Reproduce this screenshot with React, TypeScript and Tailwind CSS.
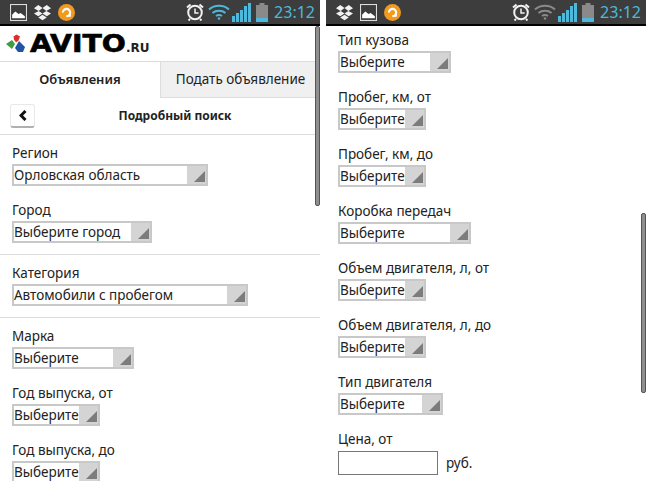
const font = { fontFamily: '"Noto Sans", "Open Sans", sans-serif' };

function ImageIcon({ className }: { className: string }) {
  return (
    <svg className={className} viewBox="0 0 16 16">
      <rect x="0.5" y="0.5" width="15" height="15" fill="none" stroke="#ddd" />
      <path d="M2 13.500V10l3-3 3 2.500 2-1 4 3v2z" fill="#fff" />
    </svg>
  );
}

function DropboxIcon({ className }: { className: string }) {
  return (
    <svg className={className} viewBox="0 0 16 16" fill="#f2f2f2">
      <path d="M4 1l4 2.800L4.400 6.600 0 4zM12 1L8 3.800l3.600 2.800L16 4zM0 9l4 2.600L8 8.900 4.400 6.600zM16 9l-4 2.600L8 8.900l3.600-2.300zM4 12.600l4-2.600 4 2.600-4 2.600z" />
    </svg>
  );
}

function AudioIcon({ className }: { className: string }) {
  return (
    <svg className={className} viewBox="0 0 16 16">
      <circle cx="8" cy="8" r="8" fill="#f39a1c" />
      <path d="M4.600 8a3.400 3.400 0 1 1 3.400 3.400" fill="none" stroke="#fff" strokeWidth="2" />
      <path d="M8 11.400h3.400V8" fill="none" stroke="#fff" strokeWidth="1.400" />
    </svg>
  );
}

function AlarmIcon({ className }: { className: string }) {
  return (
    <svg className={className} viewBox="0 0 18 18" fill="none" stroke="#f2f2f2">
      <circle cx="9" cy="9.500" r="6.800" strokeWidth="2" />
      <path d="M9 5.500v4.400h3.600" strokeWidth="1.500" />
      <path d="M1 4.500L4.500 1.500M17 4.500L13.500 1.500M4 16l-1.500 1.500M14 16l1.500 1.500" strokeWidth="2" />
    </svg>
  );
}

function WifiIcon({ className, color }: { className: string; color: string }) {
  return (
    <svg className={className} viewBox="0 0 22 16" fill="none" stroke={color} strokeWidth="2">
      <path d="M1 5.500c5.500-5 14.500-5 20 0" />
      <path d="M4.500 9c3.500-3 9.500-3 13 0" />
      <path d="M8 12c1.800-1.200 4.200-1.200 6 0" />
      <circle cx="11" cy="14.500" r="1.300" fill={color} stroke="none" />
    </svg>
  );
}

function SignalIcon({ className }: { className: string }) {
  return (
    <svg className={className} viewBox="0 0 19 19" fill="#4db8da">
      <rect x="0" y="13" width="3" height="6" />
      <rect x="4" y="10" width="3" height="9" />
      <rect x="8" y="7" width="3" height="12" />
      <rect x="12" y="3" width="3" height="16" />
      <rect x="16" y="0" width="3" height="19" />
    </svg>
  );
}

function BatteryIcon({ className }: { className: string }) {
  return (
    <svg className={className} viewBox="0 0 12 19">
      <rect x="3.500" y="0" width="5" height="2" fill="#8a8a8a" />
      <rect x="0" y="2" width="12" height="13" fill="#8a8a8a" />
      <rect x="0" y="15" width="12" height="4" fill="#4db8da" />
    </svg>
  );
}

function StatusBar({ left, wifi }: { left: React.ReactNode; wifi: string }) {
  return (
    <div className="flex h-[26px] items-center bg-[#3d3d3d] border-b-2 border-black pl-[10px] pr-[5px]">
      <div className="flex items-center gap-[7px]">{left}</div>
      <div className="ml-auto flex items-center">
        <AlarmIcon className="w-[18px] h-[18px]" />
        <WifiIcon className="ml-[4px] w-[22px] h-[16px]" color={wifi} />
        <SignalIcon className="ml-[2px] w-[19px] h-[19px]" />
        <BatteryIcon className="ml-[5px] w-[12px] h-[19px]" />
        <span className="ml-[6px] text-[16px] text-[#4db8da]">23:12</span>
      </div>
    </div>
  );
}

function Select({ value, width }: { value: string; width: string }) {
  return (
    <div className={`flex h-[22px] ${width} items-center border-2 border-[#c8c8c8] bg-white`}>
      <span className="flex-1 pt-px text-[13.500px] leading-none whitespace-nowrap text-[#222]">{value}</span>
      <span className="flex h-full w-[19px] items-end justify-end bg-[#d4d4d4] pr-px pb-[2px]">
        <svg className="w-[11px] h-[11px]" viewBox="0 0 11 11">
          <path d="M11 0v11H0z" fill="#7c7c7c" />
        </svg>
      </span>
    </div>
  );
}

function Field({ label, value, width, last }: { label: string; value: string; width: string; last?: boolean }) {
  return (
    <div className={last ? 'pb-[11px]' : 'pb-[14px]'}>
      <div className="h-[21px] text-[13.500px] leading-[20px] text-[#222]">{label}</div>
      <Select value={value} width={width} />
    </div>
  );
}

function Scrollbar({ className }: { className: string }) {
  return <div className={`absolute right-0 w-[5px] rounded-[2px] border border-[#555] bg-[#8f8f8f] ${className}`} />;
}

function LeftPanel() {
  return (
    <div className="relative h-[481px] w-[320px] overflow-hidden bg-white">
      <StatusBar
        wifi="#4db8da"
        left={
          <>
            <ImageIcon className="w-[17px] h-[17px]" />
            <DropboxIcon className="w-[17px] h-[17px]" />
            <AudioIcon className="w-[17px] h-[17px]" />
          </>
        }
      />
      <Scrollbar className="top-[26px] h-[180px]" />

      {/* Logo */}
      <div className="flex h-[35px] items-center pl-[6px]">
        <svg className="w-[20px] h-[20px]" viewBox="0 0 20 20">
          <path d="M0 10l6-4 3 4-3 5z" fill="#3f9d3f" />
          <path d="M7.500 2.500l3-2 3.500 2-1.500 4-2.500 2-2-3z" fill="#d8312c" />
          <path d="M13 7l6 6-2 5h-5l-3-4z" fill="#1f55a5" />
        </svg>
        <span
          className="ml-[4px] w-[96px] origin-left scale-x-[1.18] text-[24px] leading-none font-bold text-black"
          style={{ fontFamily: '"DejaVu Sans", sans-serif', WebkitTextStroke: '0.6px black' }}
        >
          AVITO
        </span>
        <span
          className="mt-[8px] text-[12px] leading-none font-bold text-[#222]"
          style={{ fontFamily: '"DejaVu Sans", sans-serif' }}
        >
          .RU
        </span>
      </div>

      {/* Tabs */}
      <div className="flex h-[37px] border-t border-[#ddd]">
        <div className="flex w-[160px] items-center justify-center text-[13px] font-semibold text-[#222]">Объявления</div>
        <div className="flex w-[160px] items-center justify-center border-l border-b border-[#ddd] bg-[#f0f0f0] text-[13.500px] text-[#222]">
          Подать объявление
        </div>
      </div>

      {/* Back row */}
      <div className="flex h-[37px] items-center border-b border-[#ddd] pl-[10px] pr-[5px]">
        <button className="flex h-[24px] w-[25px] items-center justify-center rounded-[3px] border border-[#e8e8e8] border-b-2 border-b-[#b0b0b0] bg-white">
          <svg className="w-[8px] h-[11px]" viewBox="0 0 8 11" fill="none" stroke="#111" strokeWidth="3">
            <path d="M6.500 1L2 5.500 6.500 10" />
          </svg>
        </button>
        <div className="flex-1 text-center text-[12px] font-bold text-[#222]">Подробный поиск</div>
      </div>

      <div className="border-b border-[#ddd] pl-[12px] pt-[8px]">
        <Field label="Регион" value="Орловская область" width="w-[196px]" />
        <Field label="Город" value="Выберите город" width="w-[140px]" last />
      </div>
      <div className="border-b border-[#ddd] pl-[12px] pt-[8px]">
        <Field label="Категория" value="Автомобили с пробегом" width="w-[236px]" last />
      </div>
      <div className="pl-[12px] pt-[8px]">
        <Field label="Марка" value="Выберите" width="w-[122px]" />
        <Field label="Год выпуска, от" value="Выберите" width="w-[88px]" />
        <Field label="Год выпуска, до" value="Выберите" width="w-[88px]" />
      </div>
    </div>
  );
}

function RightPanel() {
  return (
    <div className="relative h-[481px] w-[320px] overflow-hidden bg-white">
      <StatusBar
        wifi="#8a8a8a"
        left={
          <>
            <DropboxIcon className="w-[17px] h-[17px]" />
            <ImageIcon className="w-[17px] h-[17px]" />
            <AudioIcon className="w-[17px] h-[17px]" />
          </>
        }
      />
      <Scrollbar className="top-[213px] h-[180px]" />
      <div className="pl-[12px] pt-[4px]">
        <Field label="Тип кузова" value="Выберите" width="w-[113px]" />
        <Field label="Пробег, км, от" value="Выберите" width="w-[88px]" />
        <Field label="Пробег, км, до" value="Выберите" width="w-[88px]" />
        <Field label="Коробка передач" value="Выберите" width="w-[133px]" />
        <Field label="Объем двигателя, л, от" value="Выберите" width="w-[88px]" />
        <Field label="Объем двигателя, л, до" value="Выберите" width="w-[88px]" />
        <Field label="Тип двигателя" value="Выберите" width="w-[105px]" />
        <div className="h-[22px] text-[13.500px] leading-[20px] text-[#222]">Цена, от</div>
        <div className="flex items-center">
          <input className="h-[24px] w-[100px] border border-[#777] bg-white" />
          <span className="ml-[8px] text-[13.500px] text-[#222]">руб.</span>
        </div>
      </div>
    </div>
  );
}

export default function App() {
  return (
    <div className="flex h-[481px] w-[646px] gap-[6px] overflow-hidden bg-white" style={font}>
      <LeftPanel />
      <RightPanel />
    </div>
  );
}
